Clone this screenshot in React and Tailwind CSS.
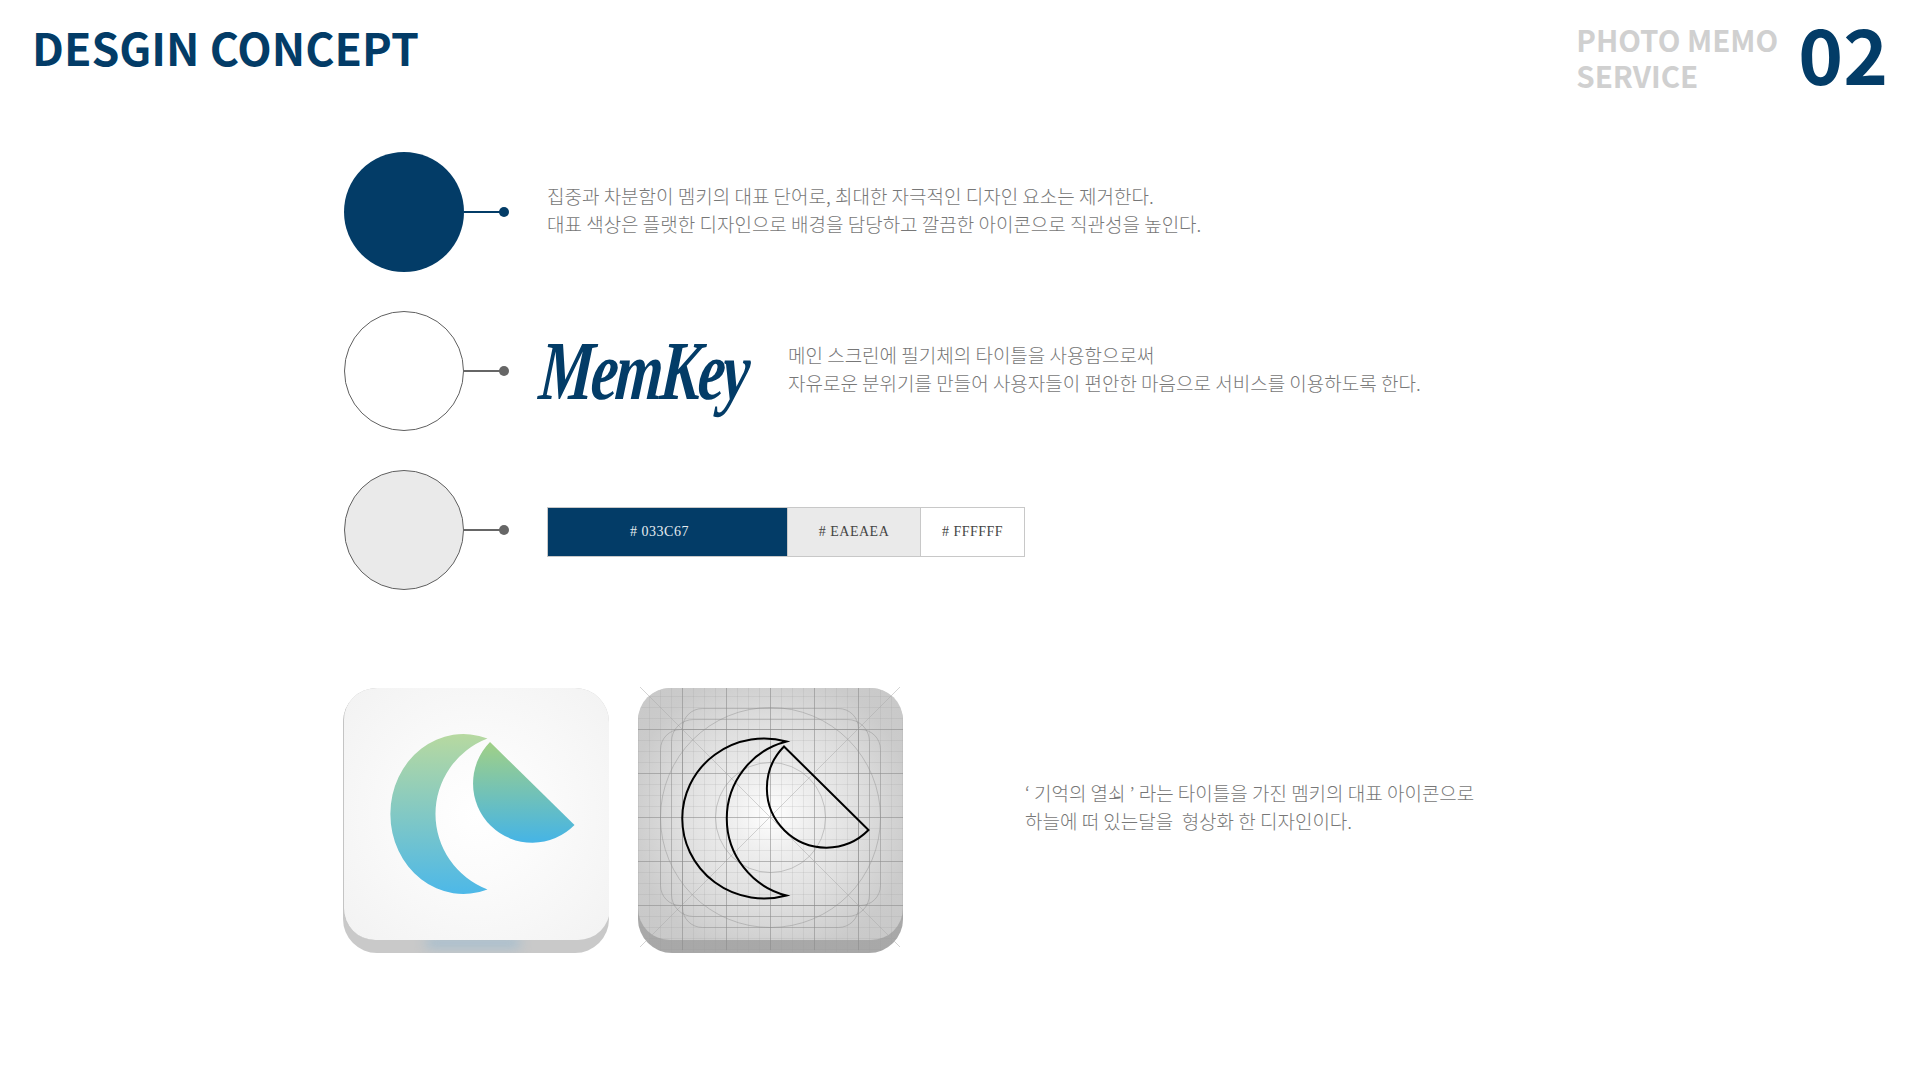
const KR = "font-['Noto_Sans_CJK_KR','Noto_Sans',sans-serif]";

function Connector({ color }) {
  return (
    <div className="flex items-center w-[45px] shrink-0">
      <div className="h-[2px] flex-1 -mr-[1px]" style={{ background: color }} />
      <div className="w-[10px] h-[10px] rounded-full -ml-[1px]" style={{ background: color }} />
    </div>
  );
}

function Desc({ lines, className = "" }) {
  return (
    <div className={`${KR} text-[19px] leading-[28px] font-light text-[#777777] whitespace-pre ${className}`}>
      {lines.map((l) => (
        <div key={l}>{l}</div>
      ))}
    </div>
  );
}

function AppIcon() {
  return (
    <div className="relative w-[266px] h-[265px] rounded-[34px] bg-[#c9c9c9] overflow-hidden">
      <div className="absolute left-[82px] bottom-[5px] w-[96px] h-[10px] rounded-full bg-[#7fb3d6] opacity-50 blur-[6px]" />
      <div className="relative w-[267px] h-[252px] rounded-[32px] border-l border-[#c4c4c4] bg-[radial-gradient(circle_at_50%_50%,#ffffff_0%,#fbfbfb_35%,#f2f2f2_100%)]">
        <svg width="300" height="300" viewBox="0 0 300 300" className="absolute -left-[14px] -top-[18px]">
          <defs>
            <linearGradient id="g1" x1="0" y1="0" x2="0" y2="1">
              <stop offset="0" stopColor="#b7d9a0" />
              <stop offset="1" stopColor="#4db8e8" />
            </linearGradient>
            <linearGradient id="g2" x1="0" y1="0" x2="0" y2="1">
              <stop offset="0" stopColor="#a1d086" />
              <stop offset="1" stopColor="#45b4e6" />
            </linearGradient>
          </defs>
          <path d="M157.5 68.5 A73 80 0 1 0 157.5 219.5 A80.8 80.8 0 0 1 157.5 68.5 Z" fill="url(#g1)" />
          <path d="M160 72 L244.5 155 A59 59 0 0 1 160 72 Z" fill="url(#g2)" />
        </svg>
      </div>
    </div>
  );
}

function GridIcon() {
  const minor = [];
  for (let i = 0; i <= 24; i++) minor.push(8.5 + i * 11);
  const majorX = [52.5, 96.5, 140.5, 184.5, 228.5];
  const majorY = [50.5, 94.5, 138.5, 182.5, 226.5];
  return (
    <div className="relative w-[265px] h-[265px] rounded-[34px] bg-[linear-gradient(to_bottom,#b0b0b0,#a8a8a8)]">
      <div className="absolute inset-x-0 top-0 h-[252px] rounded-[32px] bg-[radial-gradient(circle_at_50%_50%,#ffffff_0%,#eeeeee_22%,#e0e0e0_48%,#cbcbcb_78%,#c8c8c8_100%)]" />
      <svg width="290" height="290" viewBox="0 0 290 290" className="absolute -left-[8px] -top-[9px]">
        <defs>
          <clipPath id="iconClip">
            <rect x="8" y="9" width="265" height="265" rx="34" />
          </clipPath>
        </defs>
        <g clipPath="url(#iconClip)">
          {minor.map((v) => (
            <line key={"x" + v} x1={v} x2={v} y1="9" y2="273" stroke="#9a9a9a" strokeOpacity="0.18" strokeWidth="1" />
          ))}
          {minor.map((v) => (
            <line key={"y" + v} y1={v - 2} y2={v - 2} x1="8" x2="273" stroke="#9a9a9a" strokeOpacity="0.18" strokeWidth="1" />
          ))}
          {majorX.map((v) => (
            <line key={"X" + v} x1={v} x2={v} y1="9" y2="271" stroke="#8a8a8a" strokeOpacity="0.5" strokeWidth="1" />
          ))}
          {majorY.map((v) => (
            <line key={"Y" + v} y1={v} y2={v} x1="8" x2="273" stroke="#8a8a8a" strokeOpacity="0.5" strokeWidth="1" />
          ))}
        </g>
        <line x1="10" y1="8" x2="270" y2="268" stroke="#aaa" strokeOpacity="0.5" strokeWidth="1" />
        <line x1="270" y1="8" x2="10" y2="268" stroke="#aaa" strokeOpacity="0.5" strokeWidth="1" />
        <g fill="none" stroke="#8f8f8f" strokeOpacity="0.45" strokeWidth="1">
          <circle cx="140.5" cy="138.5" r="110" />
          <circle cx="140.5" cy="138.5" r="55" />
          <rect x="30.5" y="50.5" width="220" height="176" rx="20" />
          <rect x="52.5" y="29.5" width="176" height="219" rx="20" />
          <rect x="41.5" y="40.5" width="198" height="197" rx="22" />
        </g>
        <g fill="none" stroke="#000" strokeWidth="2" strokeLinejoin="miter">
          <path d="M156.5 62.5 A82 80 0 1 0 156.5 216.5 A79.5 79.5 0 0 1 156.5 62.5 Z" />
          <path d="M154 67.5 L238.5 151 A59 59 0 0 1 154 67.5 Z" />
        </g>
      </svg>
    </div>
  );
}

export default function App() {
  return (
    <div className={`${KR} relative w-[1920px] h-[1080px] bg-white overflow-hidden`}>
      <header className="flex justify-between h-[152px]">
        <h1 className="pl-[32px] pt-[14px] text-[44.7px] leading-[65px] font-bold text-[#033c67] whitespace-nowrap">
          DESGIN CONCEPT
        </h1>
        <div className="flex pr-[32px] pt-[21px] h-fit">
          <div className="text-[29.5px] leading-[36px] font-bold text-[#d0d0d0] w-[222px]">
            <div>PHOTO MEMO</div>
            <div>SERVICE</div>
          </div>
          <div className="text-[76px] leading-[72px] font-bold text-[#033c67] -mt-[5px]">02</div>
        </div>
      </header>

      <main className="pl-[344px] flex flex-col gap-[39px]">
        <section className="flex items-center h-[120px]">
          <div className="w-[120px] h-[120px] rounded-full bg-[#033c67] shrink-0" />
          <Connector color="#033c67" />
          <Desc
            className="ml-[38px] mb-[5px]"
            lines={[
              "집중과 차분함이 멤키의 대표 단어로, 최대한 자극적인 디자인 요소는 제거한다.",
              "대표 색상은 플랫한 디자인으로 배경을 담당하고 깔끔한 아이콘으로 직관성을 높인다.",
            ]}
          />
        </section>

        <section className="flex items-center h-[120px]">
          <div className="w-[120px] h-[120px] rounded-full bg-white border-[1.5px] border-[#606060] shrink-0" />
          <Connector color="#666666" />
          <div className="ml-[31px] w-[248px] origin-left scale-x-[0.73] -skew-x-6 font-['Liberation_Serif',serif] italic font-bold text-[84px] leading-[80px] text-[#033c67] tracking-[-4px] whitespace-nowrap">
            MemKey
          </div>
          <Desc
            className="mb-[4px]"
            lines={[
              "메인 스크린에 필기체의 타이틀을 사용함으로써",
              "자유로운 분위기를 만들어 사용자들이 편안한 마음으로 서비스를 이용하도록 한다.",
            ]}
          />
        </section>

        <section className="flex items-center h-[120px]">
          <div className="w-[120px] h-[120px] rounded-full bg-[#eaeaea] border-[1.5px] border-[#606060] shrink-0" />
          <Connector color="#666666" />
          <div className="ml-[38px] mt-[4px] flex h-[50px] w-[478px] border border-[#c8c8c8] font-['Liberation_Serif',serif] text-[14px] tracking-[0.5px]">
            <div className="w-[239px] bg-[#033c67] text-[#e6ecf0] flex items-center justify-center pr-[16px] pb-[2px]"># 033C67</div>
            <div className="w-[133px] bg-[#eaeaea] border-l border-[#c8c8c8] text-[#444] flex items-center justify-center pb-[2px]"># EAEAEA</div>
            <div className="flex-1 bg-white border-l border-[#c8c8c8] text-[#444] flex items-center justify-center pb-[2px]"># FFFFFF</div>
          </div>
        </section>

        <section className="flex items-start mt-[59px] -ml-[1px]">
          <AppIcon />
          <div className="ml-[29px]"><GridIcon /></div>
          <Desc
            className="ml-[122px] mt-[91px]"
            lines={[
              "‘ 기억의 열쇠 ’ 라는 타이틀을 가진 멤키의 대표 아이콘으로",
              "하늘에 떠 있는달을  형상화 한 디자인이다.",
            ]}
          />
        </section>
      </main>
    </div>
  );
}
